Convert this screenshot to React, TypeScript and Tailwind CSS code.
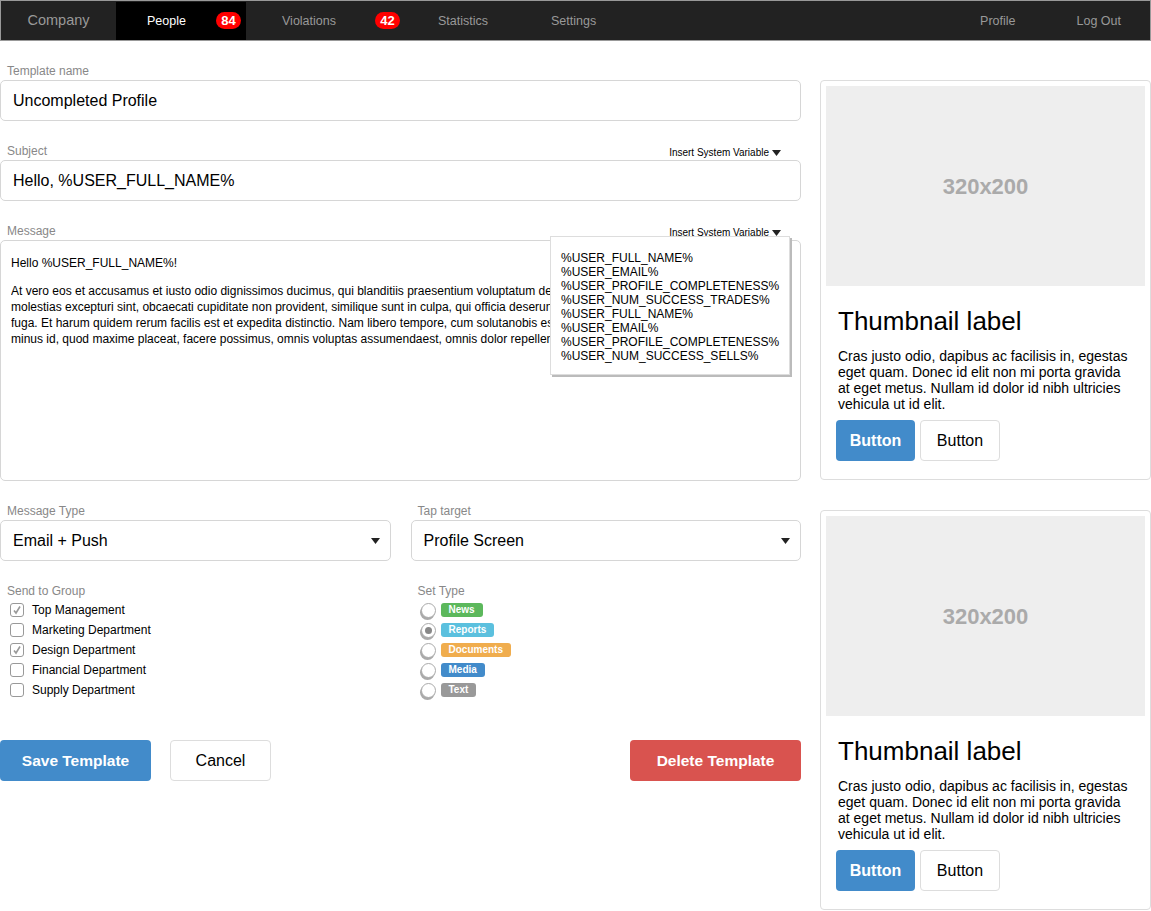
import React from 'react';

const font = { fontFamily: '"Liberation Sans", Arial, sans-serif' };

const Caret = () => (
  <svg width="9" height="6" viewBox="0 0 9 6" className="inline-block">
    <path d="M0 0 L9 0 L4.5 6 Z" fill="#222" />
  </svg>
);

const Badge = ({ n }: { n: string }) => (
  <span className="inline-flex items-center justify-center w-[25px] h-[17px] rounded-full bg-[#ff0000] text-white text-[13px] font-bold leading-none">
    {n}
  </span>
);

const NavBar = () => (
  <div className="flex h-[41px] pt-[1px] bg-[#222] border border-[#999] text-[12.5px] text-[#999] items-stretch">
    <div className="w-[115px] flex items-center justify-center text-[14.5px]">Company</div>
    <div className="w-[130px] bg-black flex items-center pl-[31px] text-white">
      <span>People</span>
      <span className="ml-[30px]"><Badge n="84" /></span>
    </div>
    <div className="flex items-center pl-[36px]">
      <span>Violations</span>
      <span className="ml-[39px]"><Badge n="42" /></span>
      <span className="ml-[38px]">Statistics</span>
      <span className="ml-[63px]">Settings</span>
    </div>
    <div className="flex-1" />
    <div className="flex items-center pr-[29px]">
      <span>Profile</span>
      <span className="ml-[61px]">Log Out</span>
    </div>
  </div>
);

const Label = ({ children, right }: { children: React.ReactNode; right?: boolean }) => (
  <div className="flex items-end justify-between h-[20px] pl-[7px] pr-[20px]">
    <span className="text-[12px] text-[#888]">{children}</span>
    {right && (
      <span className="text-[10px] text-black flex items-center gap-[3px]">
        Insert System Variable <Caret />
      </span>
    )}
  </div>
);

const TextInput = ({ value }: { value: string }) => (
  <div className="h-[41px] border border-[#d6d6d6] rounded-[5px] flex items-center px-[12px] text-[16px] text-black">
    {value}
  </div>
);

const Select = ({ value }: { value: string }) => (
  <div className="h-[41px] border border-[#d6d6d6] rounded-[5px] flex items-center justify-between pl-[12px] pr-[10px] text-[16px] text-black">
    <span>{value}</span>
    <Caret />
  </div>
);

const Checkbox = ({ checked, label }: { checked?: boolean; label: string }) => (
  <div className="flex items-center h-[20px] pl-[10px]">
    <span className="w-[14px] h-[14px] rounded-[3px] border border-[#999] bg-white flex items-center justify-center">
      {checked && (
        <svg width="10" height="10" viewBox="0 0 10 10">
          <path d="M2 5.5 L4 8 L8 1.5" stroke="#999" strokeWidth="1.6" fill="none" />
        </svg>
      )}
    </span>
    <span className="ml-[8px] text-[12px] text-black">{label}</span>
  </div>
);

const Radio = ({ checked, label, color }: { checked?: boolean; label: string; color: string }) => (
  <div className="flex items-center h-[20px] pl-[10px]">
    <span className="w-[15px] h-[15px] rounded-full border border-[#aaa] bg-white shadow-[-1px_2px_0_#aaa] flex items-center justify-center">
      {checked && <span className="w-[7px] h-[7px] rounded-full bg-[#888]" />}
    </span>
    <span className={`ml-[5px] h-[14px] px-[8px] rounded-[3px] text-white text-[10px] font-bold flex items-center leading-none ${color}`}>
      {label}
    </span>
  </div>
);

const Thumbnail = () => (
  <div className="border border-[#ddd] rounded-[4px] p-[5px] h-[400px]">
    <div className="h-[200px] bg-[#eee] flex items-center justify-center text-[22px] font-bold text-[#aaa]">
      320x200
    </div>
    <div className="px-[12px] pt-[20px]">
      <div className="text-[26px] leading-[30px] text-black">Thumbnail label</div>
      <p className="mt-[12px] text-[14px] leading-[16px] text-black">
        Cras justo odio, dapibus ac facilisis in, egestas eget quam. Donec id elit non mi porta gravida at eget metus. Nullam id dolor id nibh ultricies vehicula ut id elit.
      </p>
      <div className="flex gap-[5px] mt-[8px] -ml-[2px]">
        <button className="w-[79px] h-[41px] rounded-[4px] bg-[#428bca] text-white text-[16px] font-bold">Button</button>
        <button className="w-[80px] h-[41px] rounded-[4px] border border-[#ddd] bg-white text-black text-[16px]">Button</button>
      </div>
    </div>
  </div>
);

const vars = [
  '%USER_FULL_NAME%',
  '%USER_EMAIL%',
  '%USER_PROFILE_COMPLETENESS%',
  '%USER_NUM_SUCCESS_TRADES%',
  '%USER_FULL_NAME%',
  '%USER_EMAIL%',
  '%USER_PROFILE_COMPLETENESS%',
  '%USER_NUM_SUCCESS_SELLS%',
];

export default function App() {
  return (
    <div className="bg-white min-h-[911px] w-[1151px]" style={font}>
      <NavBar />
      <div className="flex pt-[19px]">
        {/* Left form */}
        <div className="w-[801px]">
          <Label>Template name</Label>
          <TextInput value="Uncompleted Profile" />

          <div className="mt-[19px]">
            <Label right>Subject</Label>
            <TextInput value="Hello, %USER_FULL_NAME%" />
          </div>

          <div className="mt-[19px] relative">
            <Label right>Message</Label>
            <div className="h-[241px] border border-[#d6d6d6] rounded-[5px] px-[10px] pt-[14px] text-[12px] leading-[16px] text-black overflow-hidden whitespace-nowrap">
              <div>Hello %USER_FULL_NAME%!</div>
              {/* the rest of the lines run under the variable menu */}
              <div className="mt-[12px] w-[539px] overflow-hidden">
                At vero eos et accusamus et iusto odio dignissimos ducimus, qui blanditiis praesentium voluptatum deleniti atque corrupti quos dolores<br />
                molestias excepturi sint, obcaecati cupiditate non provident, similique sunt in culpa, qui officia deserunt mollitia animi, id est laborum et<br />
                fuga. Et harum quidem rerum facilis est et expedita distinctio. Nam libero tempore, cum solutanobis est eligendi optio cumque nihil impedit<br />
                minus id, quod maxime placeat, facere possimus, omnis voluptas assumendaest, omnis dolor repellendus.
              </div>
            </div>
            {/* Insert variable popover */}
            <div className="absolute left-[550px] top-[16px] w-[240px] h-[139px] bg-white border border-[#ddd] shadow-[2px_2px_0_#bbb] pl-[10px] pt-[14px] text-[12px] leading-[14px] text-black">
              {vars.map((v, i) => (
                <div key={i}>{v}</div>
              ))}
            </div>
          </div>

          <div className="grid grid-cols-2 gap-[20px] mt-[19px]">
            <div>
              <Label>Message Type</Label>
              <Select value="Email + Push" />
            </div>
            <div>
              <Label>Tap target</Label>
              <Select value="Profile Screen" />
            </div>
          </div>

          <div className="grid grid-cols-2 gap-[20px] mt-[19px]">
            <div>
              <Label>Send to Group</Label>
              <Checkbox checked label="Top Management" />
              <Checkbox label="Marketing Department" />
              <Checkbox checked label="Design Department" />
              <Checkbox label="Financial Department" />
              <Checkbox label="Supply Department" />
            </div>
            <div>
              <Label>Set Type</Label>
              <Radio label="News" color="bg-[#5cb85c]" />
              <Radio checked label="Reports" color="bg-[#5bc0de]" />
              <Radio label="Documents" color="bg-[#f0ad4e]" />
              <Radio label="Media" color="bg-[#428bca]" />
              <Radio label="Text" color="bg-[#999]" />
            </div>
          </div>

          <div className="flex mt-[40px]">
            <button className="w-[151px] h-[41px] rounded-[4px] bg-[#428bca] text-white text-[15.5px] font-bold">Save Template</button>
            <button className="ml-[19px] w-[101px] h-[41px] rounded-[4px] border border-[#ddd] bg-white text-black text-[16px]">Cancel</button>
            <div className="flex-1" />
            <button className="w-[171px] h-[41px] rounded-[4px] bg-[#d9534f] text-white text-[15.5px] font-bold">Delete Template</button>
          </div>
        </div>

        {/* Right thumbnails */}
        <div className="ml-[19px] w-[331px] pt-[20px] flex flex-col gap-[30px]">
          <Thumbnail />
          <Thumbnail />
        </div>
      </div>
    </div>
  );
}
